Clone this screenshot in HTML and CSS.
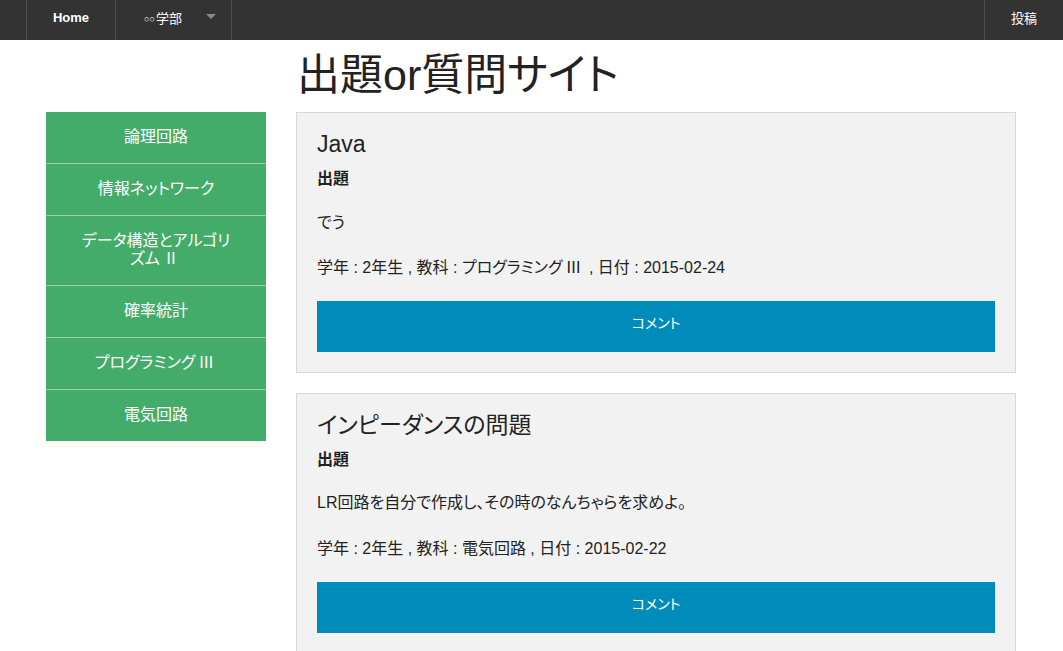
FILE: index.html
```html
<!DOCTYPE html>
<html lang="ja">
<head>
<meta charset="utf-8">
<title>出題or質問サイト</title>
<link rel="stylesheet" href="styles.css">
</head>
<body>
<nav class="topbar">
  <div class="title-area"></div>
  <ul class="nav-left">
    <li class="nav-item home">Home</li>
    <li class="nav-item dropdown"><span class="circles">○○</span>学部<span class="arrow"></span></li>
  </ul>
  <ul class="nav-right">
    <li class="nav-item post">投稿</li>
  </ul>
</nav>
<div class="page">
  <div class="head-cell">
    <h1 class="site-title">出題or質問サイト</h1>
  </div>
  <aside class="sidebar">
    <ul class="side-nav">
      <li>論理回路</li>
      <li>情報ネットワーク</li>
      <li>データ構造とアルゴリズム<span class="num">Ⅱ</span></li>
      <li>確率統計</li>
      <li>プログラミング<span class="num">Ⅲ</span></li>
      <li>電気回路</li>
    </ul>
  </aside>
  <main class="main">
    <section class="panel">
      <h4 class="panel-title">Java</h4>
      <p class="label"><strong>出題</strong></p>
      <p class="body">でう</p>
      <p class="meta">学年 : 2年生 , 教科 : プログラミング<span class="num">Ⅲ</span> , 日付 : 2015-02-24</p>
      <div class="button">コメント</div>
    </section>
    <section class="panel">
      <h4 class="panel-title">インピーダンスの問題</h4>
      <p class="label"><strong>出題</strong></p>
      <p class="body">LR回路を自分で作成し、その時のなんちゃらを求めよ。</p>
      <p class="meta">学年 : 2年生 , 教科 : 電気回路 , 日付 : 2015-02-22</p>
      <div class="button">コメント</div>
    </section>
  </main>
</div>
</body>
</html>
```

FILE: styles.css
```css
* { box-sizing: border-box; }
html, body { margin: 0; padding: 0; }
body {
  background: #fff;
  color: #222;
  font-family: "Liberation Sans", Arial, "Noto Sans CJK JP", sans-serif;
  font-feature-settings: "palt";
  font-size: 16px;
  overflow: hidden;
}
ul { list-style: none; margin: 0; padding: 0; }

.num {
  padding: 0 3px;
}

.topbar {
  height: 40px;
  background: #333;
  display: flex;
  color: #fff;
  font-size: 13px;
}
.title-area { width: 26px; }
.nav-left, .nav-right { display: flex; }
.nav-left { flex: 1; }
.nav-item {
  height: 40px;
  padding-bottom: 5px;
  border-left: 1px solid #4e4e4e;
  display: flex;
  align-items: center;
}
.home {
  width: 89px;
  justify-content: center;
  font-weight: bold;
}
.dropdown {
  width: 117px;
  padding-left: 28px;
  position: relative;
  border-right: 1px solid #4e4e4e;
}
.circles {
  font-family: "Liberation Sans", sans-serif;
  font-size: 9px;
  margin-right: 1px;
  padding-top: 3px;
}
.arrow {
  position: absolute;
  left: 90px;
  top: 14px;
  width: 0;
  height: 0;
  border-left: 5px solid transparent;
  border-right: 5px solid transparent;
  border-top: 5px solid #888;
}
.post {
  width: 79px;
  justify-content: center;
}

.page {
  display: grid;
  grid-template-columns: 220px 720px;
  column-gap: 30px;
  padding-left: 46px;
}
.head-cell { grid-column: 2; padding-top: 4px; }
.site-title {
  margin: 0 0 6px 1px;
  font-size: 43px;
  font-weight: normal;
  line-height: 62px;
  color: #222;
}
.sidebar { grid-column: 1; }
.side-nav li {
  background: #44ac6b;
  color: #fff;
  text-align: center;
  padding: 16px 30px 17px;
  line-height: 18px;
  font-size: 16px;
  border-bottom: 1px solid #94d2a8;
}
.side-nav li:last-child { border-bottom: none; }

.main { grid-column: 2; }
.panel {
  background: #f2f2f2;
  border: 1px solid #d8d8d8;
  padding: 17px 20px 20px;
  margin-bottom: 20px;
}
.panel-title {
  margin: 0 0 8px;
  font-size: 23px;
  font-weight: normal;
  line-height: 28px;
}
.panel p {
  margin: 0 0 20px;
  line-height: 25.6px;
  font-size: 16px;
}
.panel p.label { margin-bottom: 18px; }
.label strong { font-weight: bold; }
.button {
  background: #008cba;
  color: #fff;
  height: 51px;
  line-height: 45px;
  padding-bottom: 6px;
  text-align: center;
  font-size: 14px;
}
```
